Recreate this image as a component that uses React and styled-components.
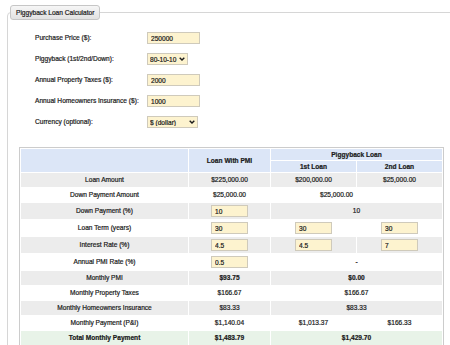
import React from 'react';
import styled, { createGlobalStyle } from 'styled-components';

const Global = createGlobalStyle`
  html, body { margin: 0; padding: 0; background: #fff; }
  body {
    font-family: "Liberation Sans", Arial, sans-serif;
    font-size: 6.6px;
    color: #1a1a1a;
    -webkit-text-stroke: 0.2px #1a1a1a;
    overflow: hidden;
  }
`;

const Page = styled.div`
  width: 450px;
  height: 345px;
  overflow: hidden;
  box-sizing: border-box;
  padding: 5px 0 0 7px;
`;

const Fieldset = styled.fieldset`
  margin: 0;
  padding: 0;
  width: 480px;
  min-height: 420px;
  box-sizing: border-box;
  border: 1px solid #d6d6d6;
  border-radius: 4px;
`;

const Legend = styled.legend`
  margin-left: 2px;
  padding: 0 5px;
  height: 15px;
  line-height: 13px;
  box-sizing: border-box;
  border: 1px solid #c6c6c6;
  border-radius: 3px;
  background: linear-gradient(#f6f6f6, #e2e2e2);
  color: #1a1a1a;
`;

const Form = styled.div`
  display: grid;
  grid-template-columns: 112px auto;
  row-gap: 9px;
  align-items: center;
  padding: 12px 0 0 27px;
`;

const Label = styled.label`
  line-height: 12px;
`;

const TextInput = styled.input`
  box-sizing: border-box;
  width: ${p => p.$w || 53}px;
  height: 12px;
  margin: 0;
  padding: 0 3px;
  border: 1px solid #cfcabb;
  background: #fdf3cf;
  font: inherit;
  color: #1a1a1a;
  outline: none;
`;

const SelectWrap = styled.div`
  position: relative;
  width: ${p => p.$w}px;
  height: 12px;
`;

const Select = styled.select`
  appearance: none;
  -webkit-appearance: none;
  box-sizing: border-box;
  width: 100%;
  height: 12px;
  margin: 0;
  padding: 0 0 0 2px;
  border: 1px solid #cfcabb;
  background: #fdf3cf;
  font: inherit;
  color: #1a1a1a;
  outline: none;
`;

const Chevron = styled.svg`
  position: absolute;
  right: 3px;
  top: 4px;
  pointer-events: none;
`;

const Table = styled.table`
  margin: 19px 0 0 11px;
  width: 425px;
  table-layout: fixed;
  border: 1px solid #cccccc;
  border-collapse: separate;
  border-spacing: 1px;
  background: #fff;
`;

const Head = styled.th`
  background: #dce6f7;
  font-weight: bold;
  height: 11px;
  padding: 0;
  text-align: center;
  line-height: 10px;
  vertical-align: middle;
`;

const Row = styled.tr`
  background: ${p => p.$bg};
`;

const Cell = styled.td`
  height: ${p => p.$h}px;
  padding: 0 ${p => p.$shift || 0}px 0 0;
  text-align: center;
  vertical-align: middle;
  font-weight: ${p => (p.$bold ? 'bold' : 'normal')};
  line-height: 10px;
`;

const CellInput = styled(TextInput)`
  display: block;
  margin: 0 auto;
  text-align: left;
`;

const GRAY = '#ececec';
const WHITE = '#ffffff';
const GREEN = '#e8f3e8';

const rows = [
  { label: 'Loan Amount', bg: GRAY, pmi: '$225,000.00', first: '$200,000.00', second: '$25,000.00' },
  { label: 'Down Payment Amount', bg: WHITE, pmi: '$25,000.00', span: '$25,000.00', shift: 40 },
  { label: 'Down Payment (%)', bg: GRAY, pmiIn: '10', span: '10', tall: true },
  { label: 'Loan Term (years)', bg: WHITE, pmiIn: '30', firstIn: '30', secondIn: '30', tall: true },
  { label: 'Interest Rate (%)', bg: GRAY, pmiIn: '4.5', firstIn: '4.5', secondIn: '7', tall: true },
  { label: 'Annual PMI Rate (%)', bg: WHITE, pmiIn: '0.5', span: '-', tall: true },
  { label: 'Monthly PMI', bg: GRAY, pmi: '$93.75', span: '$0.00', boldVals: true },
  { label: 'Monthly Property Taxes', bg: WHITE, pmi: '$166.67', span: '$166.67' },
  { label: 'Monthly Homeowners Insurance', bg: GRAY, pmi: '$83.33', span: '$83.33' },
  { label: 'Monthly Payment (P&I)', bg: WHITE, pmi: '$1,140.04', first: '$1,013.37', second: '$166.33' },
  { label: 'Total Monthly Payment', bg: GREEN, pmi: '$1,483.79', span: '$1,429.70', boldVals: true, boldLabel: true },
];

function Val({ text, input, h, bold, span, shift }) {
  return (
    <Cell $h={h} $bold={bold} colSpan={span ? 2 : undefined} $shift={shift}>
      {input !== undefined ? <CellInput $w={37} defaultValue={input} /> : text}
    </Cell>
  );
}

function ChevronIcon() {
  return (
    <Chevron width="6" height="4" viewBox="0 0 6 4">
      <polyline points="0.7,0.7 3,3 5.3,0.7" fill="none" stroke="#1a1a1a" strokeWidth="1.4" />
    </Chevron>
  );
}

export default function App() {
  return (
    <Page>
      <Global />
      <Fieldset>
        <Legend>Piggyback Loan Calculator</Legend>
        <Form>
          <Label>Purchase Price ($):</Label>
          <TextInput defaultValue="250000" />
          <Label>Piggyback (1st/2nd/Down):</Label>
          <SelectWrap $w={41}>
            <Select defaultValue="80-10-10">
              <option>80-10-10</option>
              <option>80-15-5</option>
              <option>80-20-0</option>
            </Select>
            <ChevronIcon />
          </SelectWrap>
          <Label>Annual Property Taxes ($):</Label>
          <TextInput defaultValue="2000" />
          <Label>Annual Homeowners Insurance ($):</Label>
          <TextInput defaultValue="1000" />
          <Label>Currency (optional):</Label>
          <SelectWrap $w={51}>
            <Select defaultValue="$ (dollar)">
              <option>$ (dollar)</option>
              <option>€ (euro)</option>
              <option>£ (pound)</option>
            </Select>
            <ChevronIcon />
          </SelectWrap>
        </Form>
        <Table>
          <colgroup>
            <col style={{ width: 167 }} />
            <col style={{ width: 81 }} />
            <col style={{ width: 85 }} />
            <col style={{ width: 85 }} />
          </colgroup>
          <thead>
            <tr>
              <Head rowSpan={2} />
              <Head rowSpan={2}>Loan With PMI</Head>
              <Head colSpan={2}>Piggyback Loan</Head>
            </tr>
            <tr>
              <Head>1st Loan</Head>
              <Head>2nd Loan</Head>
            </tr>
          </thead>
          <tbody>
            {rows.map(r => {
              const h = r.tall ? 16 : 14;
              return (
                <Row key={r.label} $bg={r.bg}>
                  <Cell $h={h} $bold={r.boldLabel}>{r.label}</Cell>
                  <Val h={h} bold={r.boldVals} text={r.pmi} input={r.pmiIn} />
                  {r.span !== undefined ? (
                    <Val h={h} bold={r.boldVals} text={r.span} span shift={r.shift} />
                  ) : (
                    <>
                      <Val h={h} bold={r.boldVals} text={r.first} input={r.firstIn} />
                      <Val h={h} bold={r.boldVals} text={r.second} input={r.secondIn} />
                    </>
                  )}
                </Row>
              );
            })}
          </tbody>
        </Table>
      </Fieldset>
    </Page>
  );
}
